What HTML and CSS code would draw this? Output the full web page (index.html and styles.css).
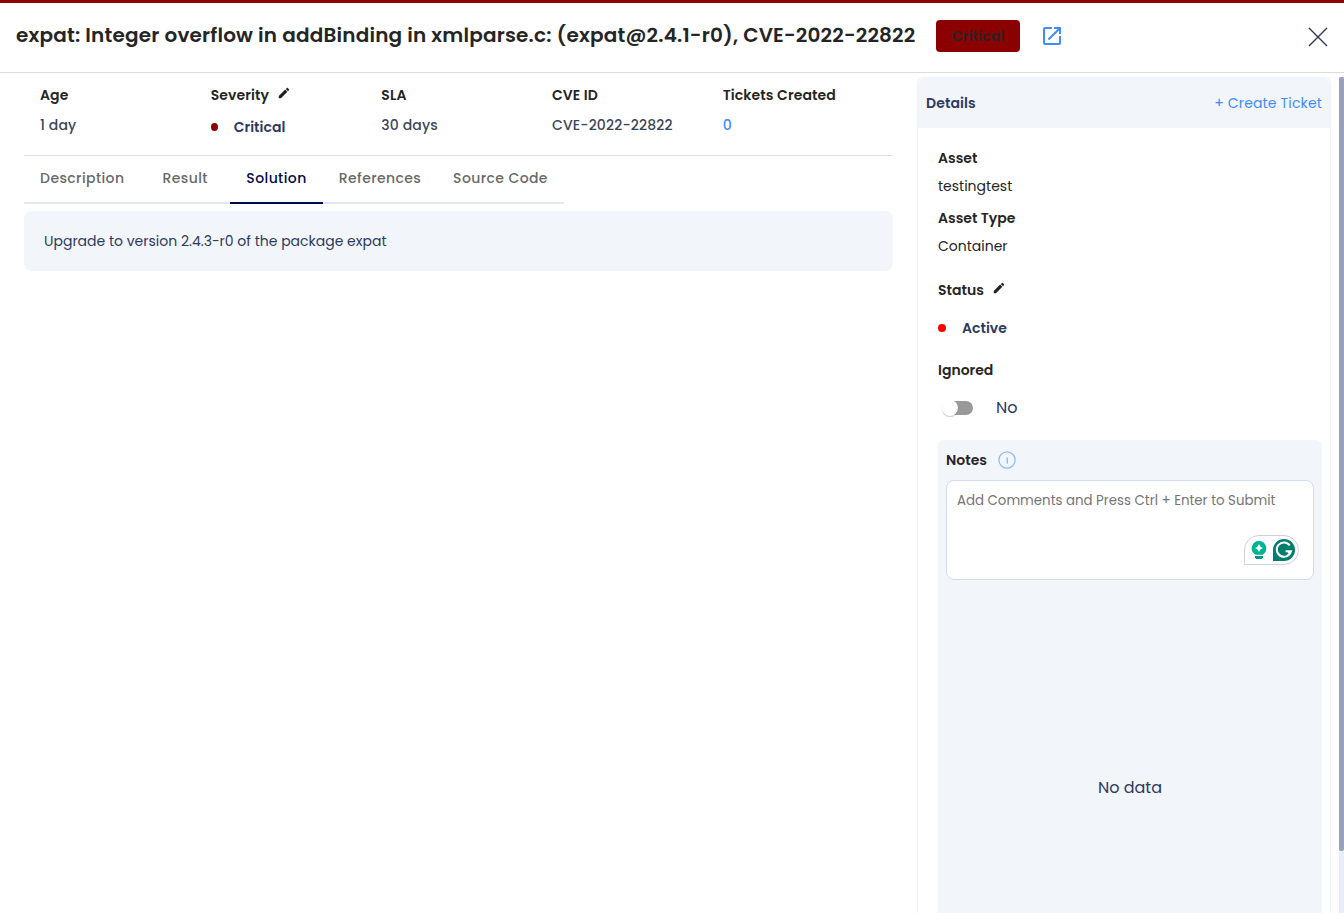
FILE: index.html
```html
<!DOCTYPE html>
<html lang="en">
<head>
<meta charset="utf-8">
<title>CVE-2022-22822</title>
<link rel="stylesheet" href="styles.css">
</head>
<body>
<div class="page">
  <header class="header">
    <h1 class="title">expat: Integer overflow in addBinding in xmlparse.c: (expat@2.4.1-r0), CVE-2022-22822</h1>
    <span class="badge">Critical</span>
    <svg class="open-icon" viewBox="0 0 24 24"><path fill="#3f8cff" d="M19 19H5V5h7V3H5c-1.11 0-2 .9-2 2v14c0 1.1.89 2 2 2h14c1.1 0 2-.9 2-2v-7h-2v7zM14 3v2h3.590l-9.830 9.830 1.410 1.410L19 6.410V10h2V3h-7z"/></svg>
    <svg class="close-icon" viewBox="0 0 20 20"><path d="M1 1l18 18M19 1L1 19" stroke="#2d3a5f" stroke-width="1.400" fill="none"/></svg>
  </header>
  <div class="body">
    <main class="main">
      <section class="stats">
        <div class="stat"><div class="label">Age</div><div class="value">1 day</div></div>
        <div class="stat"><div class="label">Severity<svg class="pencil" viewBox="0 0 24 24"><path fill="#212121" d="M3 17.250V21h3.750L17.810 9.940l-3.750-3.750L3 17.250zM20.710 7.040c.39-.39.39-1.020 0-1.410l-2.340-2.340c-.39-.39-1.020-.39-1.410 0l-1.830 1.830 3.750 3.750 1.830-1.830z"/></svg></div><div class="value value-dot"><i class="dot dot-dark"></i><b>Critical</b></div></div>
        <div class="stat"><div class="label">SLA</div><div class="value">30 days</div></div>
        <div class="stat"><div class="label">CVE ID</div><div class="value">CVE-2022-22822</div></div>
        <div class="stat"><div class="label">Tickets Created</div><div class="value link">0</div></div>
      </section>
      <nav class="tabs">
        <div class="tab tab-desc">Description</div>
        <div class="tab tab-res">Result</div>
        <div class="tab tab-sol active">Solution</div>
        <div class="tab tab-ref">References</div>
        <div class="tab tab-src">Source Code</div>
      </nav>
      <section class="solution">Upgrade to version 2.4.3-r0 of the package expat</section>
    </main>
    <aside class="side">
      <div class="side-head"><b>Details</b><a class="link">+ Create Ticket</a></div>
      <div class="side-body">
        <div class="row strong">Asset</div>
        <div class="row asset-value">testingtest</div>
        <div class="row strong">Asset Type</div>
        <div class="row">Container</div>
        <div class="row strong status">Status<svg class="pencil" viewBox="0 0 24 24"><path fill="#212121" d="M3 17.250V21h3.750L17.810 9.940l-3.750-3.750L3 17.250zM20.710 7.040c.39-.39.39-1.020 0-1.410l-2.340-2.340c-.39-.39-1.020-.39-1.410 0l-1.830 1.830 3.750 3.750 1.830-1.830z"/></svg></div>
        <div class="row active-row"><i class="dot dot-red"></i><b>Active</b></div>
        <div class="row strong ignored">Ignored</div>
        <div class="row toggle-row"><span class="switch"><i class="knob"></i></span><span class="switch-text">No</span></div>
        <div class="notes">
          <div class="notes-head">Notes<svg class="info" viewBox="0 0 18 18"><circle cx="9" cy="9" r="8.100" fill="none" stroke="#8bb8fb" stroke-width="1.200"/><path d="M8.200 7H9.300V12.500M9.300 7V12.500" fill="none" stroke="#8bb8fb" stroke-width="1"/></svg></div>
          <div class="comment">Add Comments and Press Ctrl + Enter to Submit
            <div class="assist">
              <svg class="bulb" viewBox="0 0 16 20"><path fill="#00b394" d="M8 1a7.300 7.300 0 0 0-4.500 13L5 15.500h6l1.500-1.500A7.300 7.300 0 0 0 8 1z"/><path fill="#fff" d="M8 4q.9 3.200 4 4-3.100.9-4 4-.9-3.100-4-4Q7.100 7.200 8 4z"/><path fill="#fff" d="M3 14.800h10v1.200H3z"/><path fill="#00967f" d="M4 16h8v1.500l-1.200 1.500H5.200L4 17.500z"/></svg>
              <svg class="gram" viewBox="0 0 22 22"><path fill="#027e6f" d="M11 0a11 11 0 1 1 0 22H0V11A11 11 0 0 1 11 0z"/><path fill="none" stroke="#fff" stroke-width="2" d="M16.800 6.300A7.200 7.200 0 1 0 18 12.300H12.500M15.200 14.600l2.800-2.300"/></svg>
            </div>
          </div>
          <div class="empty">No data</div>
        </div>
      </div>
    </aside>
    <div class="scroll"><div class="thumb"></div></div>
  </div>
</div>
</body>
</html>
```
FILE: styles.css
```css
* { box-sizing: border-box; }
body { margin: 0; font-family: Poppins, Inter, sans-serif; font-size: 14px; color: #252525; background: #fff; }
.page { height: 913px; overflow: hidden; display: flex; flex-direction: column; border-top: 3px solid #8b0000; }
.header { height: 70px; flex: none; display: flex; align-items: center; padding: 0 16px 4px; border-bottom: 1px solid #ddd; }
.title { margin: 0; width: 920px; flex: none; padding-bottom: 2px; font-size: 20px; font-weight: 600; line-height: 30px; letter-spacing: .185px; white-space: nowrap; }
.badge { width: 84px; height: 32px; padding-top: 1px; border-radius: 4px; background: #8b0000; color: #2b2326; font-weight: 600; letter-spacing: .15px; display: flex; align-items: center; justify-content: center; }
.open-icon { width: 24px; height: 24px; margin-left: 20px; }
.close-icon { width: 20px; height: 20px; margin: 3px 0 0 auto; }
.body { flex: 1; display: flex; min-height: 0; }
.main { width: 917px; padding: 0 24px; }
.stats { height: 83px; display: grid; grid-template-columns: repeat(5, 170.670px); padding: 12px 0 0 16px; border-bottom: 1px solid #ddd; }
.label { height: 20px; display: flex; align-items: center; font-weight: 600; letter-spacing: .1px; white-space: nowrap; }
.value { height: 20px; margin-top: 10px; display: flex; align-items: center; font-weight: 500; letter-spacing: .15px; color: #3e4658; white-space: nowrap; }
.value-dot { margin-top: 12px; letter-spacing: .05px; color: #2d3a5f; }
b { font-weight: 600; }
.dot { width: 8px; height: 8px; border-radius: 50%; margin-right: 16px; flex: none; }
.dot-dark { background: #8b0000; width: 7px; }
.dot-red { background: #f00; }
.link, .value.link { color: #3f8cff; letter-spacing: .15px; }
.pencil { width: 14px; height: 14px; margin: -4px 0 0 8px; }
.tabs { display: flex; width: 540px; height: 48px; color: #696969; font-weight: 500; letter-spacing: .4px; }
.tab { flex: none; display: flex; align-items: center; justify-content: center; padding-bottom: 2px; border-bottom: 2px solid #e2e8f3; white-space: nowrap; }
.tab-desc { width: 116.500px; }
.tab-res { width: 89.500px; }
.tab-sol { width: 93px; }
.tab-ref { width: 114px; }
.tab-src { width: 127px; }
.tab.active { color: #000b49; border-color: #000b49; }
.solution { height: 60px; margin-top: 7px; padding-left: 20px; display: flex; align-items: center; border-radius: 8px; background: #f2f5fa; color: #2d3a5f; }
.side { width: 414px; margin-top: 4px; border: 1px solid #f2f3f8; border-bottom: 0; border-radius: 6px 6px 0 0; }
.side-head { height: 50px; padding: 0 8px; display: flex; align-items: center; justify-content: space-between; background: #f2f5fa; border-radius: 6px 6px 0 0; letter-spacing: .1px; color: #2d3a5f; }
.side-body { padding: 20px 8px 0 20px; }
.row { height: 20px; display: flex; align-items: center; margin-bottom: 8px; white-space: nowrap; }
.asset-value { margin-bottom: 12px; }
.strong { font-weight: 600; }
.status { margin-top: 24px; margin-bottom: 18px; }
.active-row { margin-bottom: 22px; color: #2d3a5f; }
.ignored { margin-bottom: 18px; }
.toggle-row { margin-bottom: 22px; font-size: 16px; color: #2d3a5f; }
.switch-text { padding-bottom: 2px; }
.switch { width: 30px; height: 14px; margin: 0 23px 0 5px; border-radius: 7px; background: #999; display: flex; align-items: center; }
.knob { width: 16px; height: 16px; margin-left: -1px; flex: none; border-radius: 50%; background: #fff; box-shadow: 0 1px 1px rgba(0,0,0,.22); }
.notes { height: 520px; padding: 10px 8px; border-radius: 6px; background: #f2f5fa; }
.notes-head { height: 20px; display: flex; align-items: center; font-weight: 600; }
.info { width: 18px; height: 18px; margin-left: 11px; }
.comment { position: relative; height: 100px; margin-top: 10px; padding: 10px 10px; font-size: 13.333px; line-height: 20px; border: 1px solid #d3dcec; border-radius: 8px; background: #fff; color: #757575; white-space: nowrap; }
.assist { position: absolute; right: 14px; bottom: 14px; width: 55px; height: 30px; display: flex; align-items: center; padding-left: 6px; gap: 6px; border: 1px solid #cdd2e0; border-radius: 15px 15px 15px 0; background: #fff; }
.bulb { width: 16px; height: 20px; }
.gram { width: 22px; height: 22px; }
.empty { margin-top: 196px; line-height: 24px; text-align: center; font-size: 16px; color: #2d3a5f; }
.scroll { width: 5px; margin: 4px 0 0 8px; background: #e8edf7; }
.thumb { height: 774px; border-radius: 2px; background: #97a1ba; }
```
